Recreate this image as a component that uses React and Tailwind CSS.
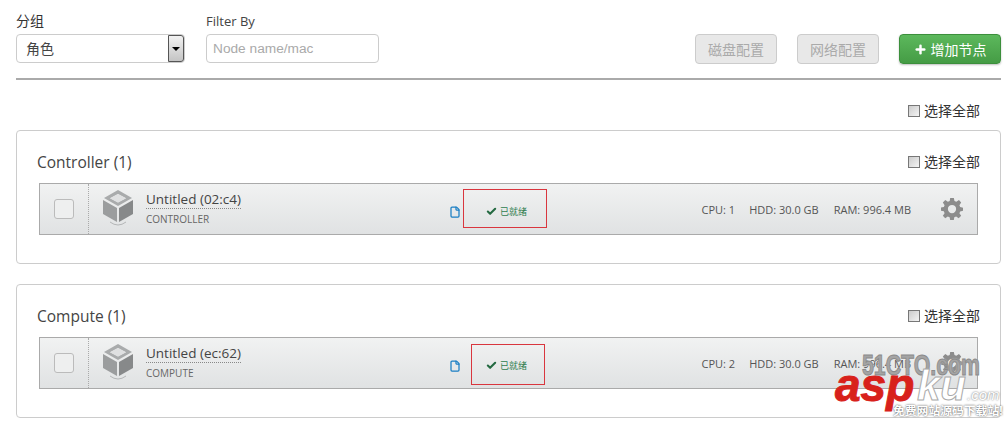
import { Check, File, Plus } from "lucide-react";

const font = { fontFamily: '"Open Sans", "Noto Sans CJK SC", sans-serif' };
const arial = { fontFamily: '"Liberation Sans", sans-serif' };

function SelectAll() {
  return (
    <label className="flex items-center gap-[4px] text-[14px] leading-5 text-[#333]">
      <span className="w-[12px] h-[12px] border border-[#777] bg-gradient-to-br from-[#ccc] to-[#f4f4f4]" />
      选择全部
    </label>
  );
}

function ConfigButton({ children }) {
  return (
    <button className="w-[82px] h-[30px] rounded-[4px] border border-[#ccc] bg-[#e8e8e8] text-[14px] text-[#aaa]">
      {children}
    </button>
  );
}

// VirtualBox style cube
function Cube() {
  return (
    <svg width="32" height="38" viewBox="0 0 32 38" className="shrink-0 -mt-[2px]">
      <path d="M16 1 L30 9 L16 17 L2 9 Z M16 5 L8 9.300 L16 13.500 L24 9.300 Z" fill="#a9abac" fillRule="evenodd" />
      <path d="M16 5 L24 9.300 L16 13.500 L8 9.300 Z" fill="#dfe0e1" />
      <path d="M1 11 L15 19 L15 33 L1 25 Z" fill="#9b9d9e" />
      <path d="M31 11 L17 19 L17 33 L31 25 Z" fill="#87898a" />
      <path d="M8 33 Q16 39 24 33" fill="none" stroke="#b4b6b7" strokeWidth="1" />
    </svg>
  );
}

function Gear() {
  return (
    <svg width="22" height="22" viewBox="0 0 24 24" fill="#8c8c8c">
      <path
        fillRule="evenodd"
        d="M10 0h4l.7 3.400 2 .8L19.600 2.300 22 5l-1.900 2.900.8 2L24 10.500v3.500l-3.100.7-.8 2L22 19.400 19.300 22l-2.800-1.900-2 .8L14 24h-4l-.6-3.100-2-.8L4.600 22 2 19.300l1.900-2.800-.8-2L0 14v-3.700l3.100-.5.8-2L2 5l2.700-2.700 2.800 1.900 2-.8zM12 7.500a4.500 4.500 0 1 0 0 9 4.500 4.500 0 0 0 0-9z"
      />
    </svg>
  );
}

function NodeRow({ name, role, cpu, ram, box }) {
  return (
    <div className="relative mx-[2px] h-[52px] border border-[#aaa] bg-gradient-to-b from-[#f1f2f2] to-[#e0e2e3] flex items-center text-[#555]">
      <div className="w-[49px] h-full flex items-center justify-center border-r border-dotted border-[#aaa]">
        <span className="w-[20px] h-[20px] rounded-[3px] border border-[#bbb] bg-[#eeefef]" />
      </div>
      <div className="ml-[13px]">
        <Cube />
      </div>
      <div className="ml-[12px] w-[303px] mb-[6px]">
        <div className="inline-block text-[13.500px] leading-[17px] text-[#444] border-b border-dotted border-[#888]">{name}</div>
        <div className="text-[10px] leading-[14px] mt-[2px] text-[#666]">{role}</div>
      </div>
      <File size={12} strokeWidth={2.5} className="text-[#1a7fc4] mt-[6px]" />
      <div className="ml-[25px] mt-[5px] flex items-center gap-[3px] text-[9px] text-[#2f7d4f]">
        <Check size={11} strokeWidth={4.5} className="text-[#256a42]" />
        已就绪
      </div>
      <div className="ml-auto mr-[14px] flex items-center text-[11px]">
        <span className="mt-[2px]">CPU: {cpu}</span>
        <span className="ml-[14px] mt-[2px]">HDD: 30.0 GB</span>
        <span className="ml-[15px] mt-[2px]">RAM: {ram}</span>
        <span className="ml-[30px]">
          <Gear />
        </span>
      </div>
      <div className={`absolute border border-[#d9363e] ${box}`} />
    </div>
  );
}

function Group({ title, children }) {
  return (
    <section className="h-[134px] rounded-[4px] border border-[#ccc] px-[20px] pt-[20px]">
      <div className="flex items-center justify-between h-[22px] mb-[10px]">
        <h2 className="text-[15.500px] text-[#444] mt-[1px]">{title}</h2>
        <SelectAll />
      </div>
      {children}
    </section>
  );
}

export default function App() {
  return (
    <div className="relative h-[423px] w-[1004px] overflow-hidden bg-white pl-[16px] pr-[3px] pt-[12px]" style={font}>
      <div className="flex items-end h-[52px]">
        <div className="w-[169px]">
          <div className="text-[14px] leading-[18px] mb-[4px] text-[#333]">分组</div>
          <div className="h-[29px] mb-[1px] rounded-[4px] border border-[#ccc] flex items-center justify-between text-[14px] text-[#444] pl-[9px]">
            角色
            <span className="w-[16px] h-full rounded-r-[3px] border border-[#555] bg-gradient-to-b from-[#f2f2f2] to-[#c4c4c4] flex items-center justify-center">
              <span className="border-x-[4px] border-t-[4px] border-x-transparent border-t-black" />
            </span>
          </div>
        </div>
        <div className="ml-[21px] w-[173px]">
          <div className="text-[13px] leading-[18px] mb-[4px] text-[#444]">Filter By</div>
          <input
            placeholder="Node name/mac"
            className="block w-full h-[29px] mb-[1px] rounded-[4px] border border-[#ccc] px-[6px] text-[13.700px] placeholder:text-[#aaa]"
            style={arial}
          />
        </div>
        <div className="ml-auto flex gap-[20px]">
          <ConfigButton>磁盘配置</ConfigButton>
          <ConfigButton>网络配置</ConfigButton>
          <button className="w-[102px] h-[30px] rounded-[4px] border border-[#3c8f3c] bg-gradient-to-b from-[#5cb85c] to-[#459c45] text-[14px] text-white flex items-center justify-center gap-[4px] shadow-[0_1px_2px_rgba(0,0,0,0.25)]">
            <Plus size={13} strokeWidth={4.5} />
            增加节点
          </button>
        </div>
      </div>
      <div className="h-[2px] bg-[#aaa] mt-[14px]" />
      <div className="flex justify-end h-[50px] pt-[21px] pr-[21px]">
        <div className="h-0">
          <SelectAll />
        </div>
      </div>
      <Group title="Controller (1)">
        <NodeRow name="Untitled (02:c4)" role="CONTROLLER" cpu="1" ram="996.4 MB" box="left-[423px] top-[5px] w-[84px] h-[39px]" />
      </Group>
      <div className="h-[20px]" />
      <Group title="Compute (1)">
        <NodeRow name="Untitled (ec:62)" role="COMPUTE" cpu="2" ram="996.4 MB" box="left-[431px] top-[6px] w-[74px] h-[41px]" />
      </Group>

      {/* watermark stamped on the screenshot */}
      <div className="absolute left-[862px] top-[350px] text-[30px] leading-none font-bold whitespace-nowrap text-[#a4a4a4] [-webkit-text-stroke:1px_#8a8a8a] [text-shadow:0_0_2px_#eee] origin-left scale-x-[0.71]" style={arial}>
        51CTO.com
      </div>
      <div className="absolute left-[835px] top-[362px] text-[46px] leading-none font-bold italic text-[#d8211b] [-webkit-text-stroke:1px_#d8211b]" style={arial}>
        asp
      </div>
      <div className="absolute left-[917px] top-[365px] text-[42px] leading-none font-bold italic text-white [-webkit-text-stroke:1px_#aaa]" style={arial}>
        ku
      </div>
      <div className="absolute left-[967px] top-[387px] text-[15px] leading-none italic text-white [text-shadow:0_0_2px_#555]" style={arial}>
        .com
      </div>
      <div className="absolute left-[893px] top-[405px] text-[11.800px] leading-none font-bold whitespace-nowrap text-white [text-shadow:0_0_2px_#333]">
        免费网站源码下载站!
      </div>
    </div>
  );
}
